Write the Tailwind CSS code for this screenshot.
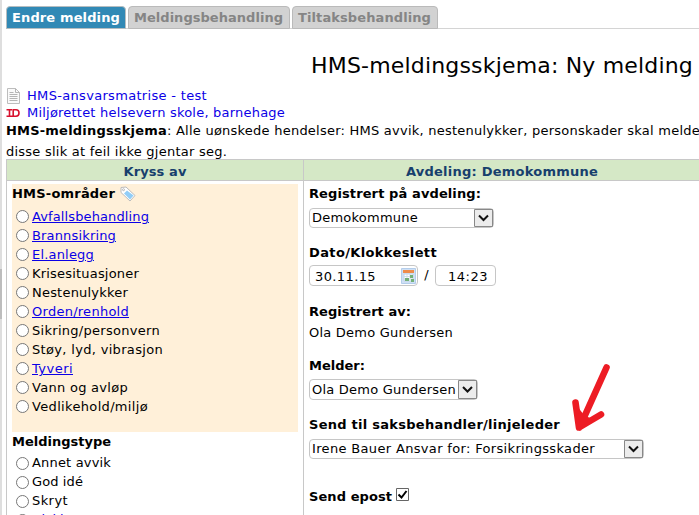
<!DOCTYPE html>
<html lang="no">
<head>
<meta charset="utf-8">
<title>HMS-meldingsskjema</title>
<script src="https://cdn.jsdelivr.net/npm/@tailwindcss/browser@4"></script>
</head>
<body class="relative h-[515px] w-[699px] overflow-hidden bg-white font-['DejaVu_Sans',Verdana,sans-serif] text-[13px] leading-[19px] whitespace-nowrap text-black">
<div class="flex h-[515px]">
  <div class="w-[2px] shrink-0 bg-[#dedede] pt-[269px]"><div class="h-[50px] bg-[#bdbdbd]"></div></div>
  <main class="ml-1 w-[693px] shrink-0">
    <nav class="flex h-[29px] gap-0.5 border-b border-[#d4d4d4] pt-1.5 font-bold leading-[22px]">
      <div class="h-[23px] w-[120px] rounded-t border border-[#b5bdc0] bg-[#3189b5] pl-[5px] text-white"><span data-w="108">Endre melding</span></div>
      <div class="h-[23px] w-[162px] rounded-t border border-[#bababa] bg-[#d2d2d2] pl-[5px] text-[#858585]"><span data-w="149">Meldingsbehandling</span></div>
      <div class="h-[23px] w-[146px] rounded-t border border-[#bababa] bg-[#d2d2d2] pl-[5px] text-[#858585]"><span data-w="133">Tiltaksbehandling</span></div>
    </nav>
    <h1 class="h-[57px] pt-[22px] pl-[305px] text-[22px] leading-[30px]"><span data-w="382">HMS-meldingsskjema: Ny melding</span></h1>
    <div class="flex h-[17px] items-start text-[#0b00e6]">
      <svg class="mt-[2px] mr-[7px] shrink-0" width="14" height="16" viewBox="0 0 14 16"><path d="M1.500.5h8l4 4v11h-12z" fill="#fafafa" stroke="#bdbdbd"/><path d="M9.500.5v4h4M3.500 4.500h4M3.500 6.500h8M3.500 8.500h8M3.500 10.500h8M3.500 12.500h8" fill="none" stroke="#b5b5b5"/></svg>
      <span data-w="180">HMS-ansvarsmatrise - test</span>
    </div>
    <div class="flex h-[17px] items-start text-[#0b00e6]">
      <svg class="mt-[5px] mr-[7px] shrink-0" width="14" height="10" viewBox="0 0 14 10"><path d="M.5 1.800H6M3.500 1.800v6.500M.5 8.200H10c4 0 4-6.400 0-6.400H7.200v6" fill="none" stroke="#d8122e" stroke-width="1.600"/></svg>
      <span data-w="258">Miljørettet helsevern skole, barnehage</span>
    </div>
    <p class="h-[39px] leading-[21px]"><b data-w="161">HMS-meldingsskjema</b><span data-w="533">: Alle uønskede hendelser: HMS avvik, nestenulykker, personskader skal melde</span><br><span data-w="221">disse slik at feil ikke gjentar seg.</span></p>
    <div class="grid h-[356px] grid-cols-[297px_396px] grid-rows-[22px_334px]">
      <div class="border border-r-0 border-[#c8c8c8] bg-[#d5e8c6] text-center font-bold leading-[23px] text-[#173f6d]"><span data-w="63">Kryss av</span></div>
      <div class="border border-r-0 border-[#c8c8c8] bg-[#d5e8c6] pl-[102px] font-bold leading-[23px] text-[#173f6d]"><span data-w="192">Avdeling: Demokommune</span></div>
      <section class="border-l border-[#c8c8c8] pt-[3px] pl-[5px]">
        <div class="h-[248px] w-[286px] bg-[#fff0d9]">
          <h2 class="flex h-[23px] items-start font-bold"><span data-w="103">HMS-områder</span>
            <svg class="mt-[2px] ml-[5px]" width="16" height="16" viewBox="0 0 16 16"><path d="M1 1.500 6 1l9 8.500-5 5.500L1 6.500z" fill="#fff" stroke="#bbb"/><path d="m7 4.500 6.500 5-3.500 4-6-6z" fill="#91cdf7"/><circle cx="3.500" cy="3.700" r="1" fill="#fff" stroke="#aaa" stroke-width=".8"/></svg>
          </h2>
          <div id="areas"></div>
        </div>
        <h2 class="h-[22px] font-bold"><span data-w="99">Meldingstype</span></h2>
        <div id="types" class="leading-[17px]"></div>
      </section>
      <section class="border-l border-[#c8c8c8] pt-[3px] pl-[5px]">
        <h2 class="h-[24px] font-bold"><span data-w="172">Registrert på avdeling:</span></h2>
        <div class="flex h-5 w-[185px] items-center rounded border border-[#c6c6c6] pl-[2px] leading-[20px]"><span data-w="106">Demokommune</span><svg class="ml-auto shrink-0" width="19" height="18"><path d="M.5.5h18v17H.5z" fill="#ececec" stroke="#888"/><path d="m5 6.500 4.500 4.500L14 6.500" fill="none" stroke="#111" stroke-width="2"/></svg></div>
        <h2 class="mt-[15px] h-[22px] font-bold"><span data-w="128">Dato/Klokkeslett</span></h2>
        <div class="flex h-[21px]">
          <div class="flex w-[109px] rounded border border-[#c6c6c6] pl-[5px] leading-[21px]"><span data-w="61">30.11.15</span>
            <svg class="mt-[2px] mr-[1px] ml-auto" width="15" height="16"><path d="M.5.5h14v15H.5z" fill="#cfe0f5" stroke="#b4cdea"/><path d="M2 2h11v3H2z" fill="#ee8c4b"/><path d="M3 6h9v7H3z" fill="#fff" stroke="#c4d4e6"/><path d="M3 8.500h9M3 11h9M6 6v7M9 6v7" stroke="#d0dbe7"/><path d="M9 7h3v3H9zM4 10h4v3H4zM10 11h3v3h-3z" fill="#73b077"/></svg></div>
          <span class="w-[17px] text-center">/</span>
          <div class="w-[61px] rounded border border-[#c6c6c6] pl-[12px] leading-[21px]"><span data-w="40">14:23</span></div>
        </div>
        <h2 class="mt-[16px] h-[21px] font-bold"><span data-w="102">Registrert av:</span></h2>
        <div class="h-[19px]"><span data-w="144">Ola Demo Gundersen</span></div>
        <h2 class="mt-[14px] h-[23px] font-bold"><span data-w="56">Melder:</span></h2>
        <div class="flex h-[21px] w-[169px] items-center rounded border border-[#c6c6c6] pl-[2px] leading-[21px]"><span data-w="144">Ola Demo Gundersen</span><svg class="ml-auto shrink-0" width="19" height="19"><path d="M.5.5h18v18H.5z" fill="#ececec" stroke="#888"/><path d="m5 7 4.500 4.500L14 7" fill="none" stroke="#111" stroke-width="2"/></svg></div>
        <h2 class="mt-[15px] h-[24px] font-bold"><span data-w="251">Send til saksbehandler/linjeleder</span></h2>
        <div class="flex h-5 w-[335px] items-center rounded border border-[#c6c6c6] pl-[2px] leading-[20px]"><span data-w="283">Irene Bauer Ansvar for: Forsikringsskader</span><svg class="ml-auto shrink-0" width="19" height="18"><path d="M.5.5h18v17H.5z" fill="#ececec" stroke="#888"/><path d="m5 6.500 4.500 4.500L14 6.500" fill="none" stroke="#111" stroke-width="2"/></svg></div>
        <div class="mt-[28px] flex font-bold"><span data-w="83">Send epost</span><svg class="mt-[1px] ml-[4px]" width="13" height="13"><path d="M.5.5h12v12H.5z" fill="#fff" stroke="#666"/><path d="m2.500 6.500 3 3L10.500 3" fill="none" stroke="#000" stroke-width="2"/></svg></div>
      </section>
    </div>
  </main>
</div>
<svg class="absolute top-[360px] left-[568px]" width="46" height="76" viewBox="568 360 46 76"><path d="M606.500 367.500 579.500 427.500M575.500 402.500l3.500 25 22-13" fill="none" stroke="#ed1c24" stroke-width="6.600" stroke-linecap="round" stroke-linejoin="round"/><path d="m577 406 3 21 12-8-8-4z" fill="#ed1c24"/></svg>
<script>
// Option lists: [label, text width, is link]
function options(id, list) {
  document.getElementById(id).innerHTML = list.map(([label, w, link]) =>
    `<label class="flex h-[19px] items-start pl-1"><span class="mt-[3px] mr-[3px] h-[13px] w-[13px] shrink-0 rounded-full border border-[#777] bg-white"></span><span data-w="${w}" class="${link ? 'text-[#0b00e6] underline' : ''}">${label}</span></label>`).join('');
}
options('areas', [['Avfallsbehandling',117,1],['Brannsikring',84,1],['El.anlegg',62,1],['Krisesituasjoner',107],['Nestenulykker',96],['Orden/renhold',97,1],['Sikring/personvern',128],['Støy, lyd, vibrasjon',131],['Tyveri',41,1],['Vann og avløp',96],['Vedlikehold/miljø',116]]);
options('types', [['Annet avvik',79],['God idé',51],['Skryt',36],['Ulykke',43,1]]);
// Fit each text run to its nominal width by tracking
const ctx = document.createElement('canvas').getContext('2d');
document.querySelectorAll('[data-w]').forEach(e => {
  const bold = e.closest('b, h2, .font-bold') ? 'bold ' : '';
  const size = e.closest('h1') ? 22 : 13;
  ctx.font = `${bold}${size}px "DejaVu Sans"`;
  const d = +e.dataset.w - ctx.measureText(e.textContent).width;
  e.style.letterSpacing = d / e.textContent.length + 'px';
});
</script>
</body>
</html>
